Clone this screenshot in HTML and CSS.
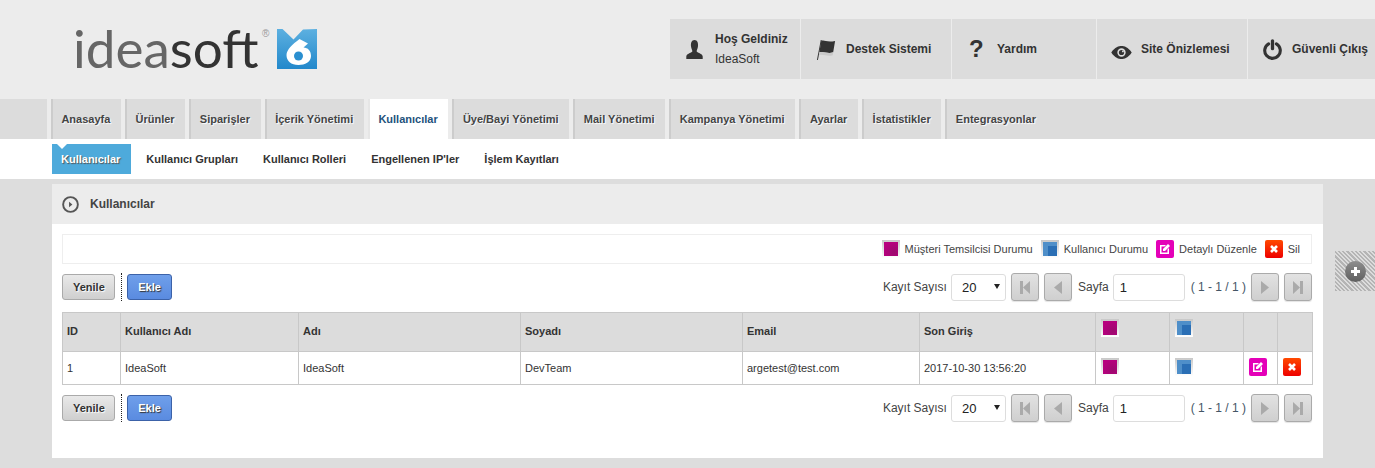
FILE: index.html
```html
<!DOCTYPE html>
<html>
<head>
    <title>Kullanıcılar</title>
    <link rel="stylesheet" href="styles.css">
</head>
<body>
    <div class="header">
        <div class="logo">
            <span class="logo-text"><span class="logo-idea">idea</span>soft</span>
            <span class="logo-reg">®</span>
            <svg class="logo-six" width="40" height="40" viewBox="0 0 40 40">
                <defs>
                    <linearGradient id="six-bg" x1="0" y1="0" x2="0" y2="1">
                        <stop offset="0" stop-color="#5db0e0"/>
                        <stop offset="1" stop-color="#2288cb"/>
                    </linearGradient>
                </defs>
                <path d="M0 0 L5.500 0 L16.500 10.500 L26 0.500 L40 0 L40 40 L0 40 Z" fill="url(#six-bg)"/>
                <path d="M22.500 10 L31 14.500 L26.500 18.500 C31 18.500 34 22 34 27 C34 33 28 36 21.500 36 C14 36 9.500 32 9.500 26 C9.500 20.500 16 15 22.500 10 Z" fill="#fff"/>
                <circle cx="21.500" cy="27" r="4.500" fill="#2a8fd0"/>
            </svg>
        </div>
        <div class="top-menu">
            <a class="top-item top-user">
                <svg width="19" height="21" viewBox="0 0 22 24"><path d="M11 1 C14.500 1 15.500 5 15 8.500 C14.700 11 13.500 12.500 13.500 14 C13.500 16 20.500 16.500 20.500 20 L20.500 23 L1.500 23 L1.500 20 C1.500 16.500 8.500 16 8.500 14 C8.500 12.500 7.300 11 7 8.500 C6.500 5 7.500 1 11 1 Z" fill="#333"/></svg>
                <span class="top-text"><b>Hoş Geldiniz</b><span>IdeaSoft</span></span>
            </a>
            <a class="top-item top-support">
                <svg width="21" height="23" viewBox="0 0 22 24"><path d="M1 23 L5 2 L6 2 L2 23 Z" fill="#333"/><path d="M5.500 3 C9 1.500 11 5 20 3 L18 15 C12 17 8 13.500 3.500 15 Z" fill="#333"/><path d="M3.500 15 C8 13.500 12 17 18 15 L17.500 18 C12 20 8 16.500 3 18 Z" fill="#c9c9c9"/></svg>
                <b>Destek Sistemi</b>
            </a>
            <a class="top-item top-help">
                <span class="help-mark">?</span>
                <b>Yardım</b>
            </a>
            <a class="top-item top-preview">
                <svg class="eye" width="21" height="13" viewBox="0 0 22 14"><path fill-rule="evenodd" d="M0 7 C4 1 8 0 11 0 C14 0 18 1 22 7 C18 13 14 14 11 14 C8 14 4 13 0 7 Z M11 2.500 A4.500 4.500 0 1 0 11 11.500 A4.500 4.500 0 1 0 11 2.500 Z" fill="#333"/><circle cx="11" cy="7" r="2.800" fill="#333"/><circle cx="12.500" cy="5.800" r="1" fill="#ddd"/></svg>
                <b>Site Önizlemesi</b>
            </a>
            <a class="top-item top-exit">
                <svg width="19" height="21" viewBox="0 0 22 24"><path d="M6.500 5.500 A9 9 0 1 0 15.500 5.500" fill="none" stroke="#333" stroke-width="3.600" stroke-linecap="round"/><path d="M11 2 L11 11" stroke="#333" stroke-width="3.800" stroke-linecap="round"/></svg>
                <b>Güvenli Çıkış</b>
            </a>
        </div>
    </div>

    <div class="nav">
        <a class="tab">Anasayfa</a>
        <a class="tab">Ürünler</a>
        <a class="tab">Siparişler</a>
        <a class="tab">İçerik Yönetimi</a>
        <a class="tab active">Kullanıcılar</a>
        <a class="tab">Üye/Bayi Yönetimi</a>
        <a class="tab">Mail Yönetimi</a>
        <a class="tab">Kampanya Yönetimi</a>
        <a class="tab">Ayarlar</a>
        <a class="tab">İstatistikler</a>
        <a class="tab">Entegrasyonlar</a>
    </div>

    <div class="subnav">
        <a class="sub active">Kullanıcılar</a>
        <a class="sub">Kullanıcı Grupları</a>
        <a class="sub">Kullanıcı Rolleri</a>
        <a class="sub">Engellenen IP'ler</a>
        <a class="sub">İşlem Kayıtları</a>
    </div>

    <div class="panel">
        <div class="panel-title">
            <svg width="17" height="17" viewBox="0 0 18 18"><circle cx="9" cy="9" r="7.800" fill="none" stroke="#555" stroke-width="2"/><path d="M7.500 6 L11 9 L7.500 12 Z" fill="#555"/></svg>
            <span>Kullanıcılar</span>
        </div>
        <div class="panel-body">
            <div class="legend">
                <span class="legend-item"><i class="status status-pink"></i>Müşteri Temsilcisi Durumu</span>
                <span class="legend-item"><i class="status status-blue"></i>Kullanıcı Durumu</span>
                <span class="legend-item"><i class="action action-edit"><svg width="12" height="12" viewBox="0 0 12 12"><path d="M1 2 H7 L5.500 3.500 H2.500 V9.500 H8.500 V6.500 L10 5 V11 H1 Z" fill="#fff"/><path d="M9 1 L11 3 L6 8 L4 8 L4 6 Z" fill="#fff"/></svg></i>Detaylı Düzenle</span>
                <span class="legend-item"><i class="action action-del"><svg width="10" height="10" viewBox="0 0 10 10"><path d="M2 2 L8 8 M8 2 L2 8" stroke="#fff" stroke-width="2.600"/></svg></i>Sil</span>
            </div>

            <div class="toolbar">
                <div class="toolbar-left">
                    <button class="btn">Yenile</button>
                    <span class="sep"></span>
                    <button class="btn btn-blue">Ekle</button>
                </div>
                <div class="pager">
                    <span class="pager-label">Kayıt Sayısı</span>
                    <span class="select">20<i class="caret"></i></span>
                    <button class="page-btn"><svg width="10" height="13" viewBox="0 0 10 13"><path d="M0 0 H3 V13 H0 Z M10 0 V13 L3 6.500 Z" fill="#aaa"/></svg></button>
                    <button class="page-btn"><svg width="8" height="13" viewBox="0 0 8 13"><path d="M8 0 V13 L0 6.500 Z" fill="#aaa"/></svg></button>
                    <span class="pager-label pager-page">Sayfa</span>
                    <span class="page-input">1</span>
                    <span class="pager-info">( 1 - 1 / 1 )</span>
                    <button class="page-btn"><svg width="8" height="13" viewBox="0 0 8 13"><path d="M0 0 V13 L8 6.500 Z" fill="#aaa"/></svg></button>
                    <button class="page-btn"><svg width="10" height="13" viewBox="0 0 10 13"><path d="M10 0 H7 V13 H10 Z M0 0 V13 L7 6.500 Z" fill="#aaa"/></svg></button>
                </div>
            </div>

            <table class="grid">
                <colgroup>
                    <col class="c-id"><col class="c-user"><col class="c-name"><col class="c-name"><col class="c-email"><col class="c-login">
                    <col class="c-status"><col class="c-status"><col class="c-act"><col class="c-act-last">
                </colgroup>
                <thead>
                    <tr>
                        <th>ID</th><th>Kullanıcı Adı</th><th>Adı</th><th>Soyadı</th><th>Email</th><th>Son Giriş</th>
                        <th class="icon-cell"><i class="status status-pink"></i></th>
                        <th class="icon-cell"><i class="status status-blue"></i></th>
                        <th></th><th></th>
                    </tr>
                </thead>
                <tbody>
                    <tr>
                        <td>1</td><td>IdeaSoft</td><td>IdeaSoft</td><td>DevTeam</td><td>argetest@test.com</td><td>2017-10-30 13:56:20</td>
                        <td class="icon-cell"><i class="status status-pink"></i></td>
                        <td class="icon-cell"><i class="status status-blue"></i></td>
                        <td class="icon-cell"><i class="action action-edit"><svg width="12" height="12" viewBox="0 0 12 12"><path d="M1 2 H7 L5.500 3.500 H2.500 V9.500 H8.500 V6.500 L10 5 V11 H1 Z" fill="#fff"/><path d="M9 1 L11 3 L6 8 L4 8 L4 6 Z" fill="#fff"/></svg></i></td>
                        <td class="icon-cell"><i class="action action-del"><svg width="10" height="10" viewBox="0 0 10 10"><path d="M2 2 L8 8 M8 2 L2 8" stroke="#fff" stroke-width="2.600"/></svg></i></td>
                    </tr>
                </tbody>
            </table>

            <div class="toolbar toolbar-bottom">
                <div class="toolbar-left">
                    <button class="btn">Yenile</button>
                    <span class="sep"></span>
                    <button class="btn btn-blue">Ekle</button>
                </div>
                <div class="pager">
                    <span class="pager-label">Kayıt Sayısı</span>
                    <span class="select">20<i class="caret"></i></span>
                    <button class="page-btn"><svg width="10" height="13" viewBox="0 0 10 13"><path d="M0 0 H3 V13 H0 Z M10 0 V13 L3 6.500 Z" fill="#aaa"/></svg></button>
                    <button class="page-btn"><svg width="8" height="13" viewBox="0 0 8 13"><path d="M8 0 V13 L0 6.500 Z" fill="#aaa"/></svg></button>
                    <span class="pager-label pager-page">Sayfa</span>
                    <span class="page-input">1</span>
                    <span class="pager-info">( 1 - 1 / 1 )</span>
                    <button class="page-btn"><svg width="8" height="13" viewBox="0 0 8 13"><path d="M0 0 V13 L8 6.500 Z" fill="#aaa"/></svg></button>
                    <button class="page-btn"><svg width="10" height="13" viewBox="0 0 10 13"><path d="M10 0 H7 V13 H10 Z M0 0 V13 L7 6.500 Z" fill="#aaa"/></svg></button>
                </div>
            </div>
        </div>
    </div>

    <div class="side-tab"><span class="side-plus"></span></div>
</body>
</html>
```

FILE: styles.css
```css
html, body {
    margin: 0;
    padding: 0;
    height: 468px;
    overflow: hidden;
}

body {
    background-color: #dddddd;
    font-family: "Liberation Sans", Arial, sans-serif;
    font-size: 11px;
    color: #333;
    position: relative;
}

/* Top area */
.header {
    height: 99px;
    background-color: #ececec;
    display: flex;
    justify-content: space-between;
    box-sizing: border-box;
    padding-left: 73px;
}

.logo {
    display: flex;
    align-items: flex-start;
    padding-top: 18px;
}

.logo-text {
    width: 188px;
    font-family: Lato, "Open Sans", sans-serif;
    font-weight: 400;
    font-size: 53px;
    line-height: 60px;
    color: #333;
}

.logo-idea {
    color: #666;
}

.logo-reg {
    width: 15px;
    margin: 11px 0 0 1px;
    font-size: 10px;
    line-height: 10px;
    color: #999;
}

.logo-six {
    margin-top: 11px;
}

.top-menu {
    display: flex;
    height: 60px;
    margin-top: 19px;
}

.top-item {
    display: flex;
    align-items: center;
    box-sizing: border-box;
    height: 60px;
    background-color: #dcdcdc;
    margin-right: 1px;
    font-size: 12px;
    color: #333;
}

.top-user { width: 130px; padding-left: 15px; gap: 11px; }
.top-support { width: 150px; padding-left: 15px; gap: 9px; }
.top-help { width: 144px; padding-left: 17px; gap: 13px; }
.top-preview { width: 150px; padding-left: 14px; gap: 9px; }
.top-exit { width: 127px; padding-left: 15px; gap: 10px; margin-right: 0; }

.top-text {
    display: flex;
    flex-direction: column;
    gap: 6px;
}

.help-mark {
    width: 15px;
    font-size: 24px;
    font-weight: bold;
}

.eye {
    margin-top: 6px;
}

/* Main tabs */
.nav {
    height: 40px;
    background-color: #dcdcdc;
    display: flex;
    padding-left: 47px;
}

.tab {
    display: flex;
    align-items: center;
    height: 40px;
    box-sizing: border-box;
    padding: 0 10.8px 0 8.4px;
    margin-left: 4px;
    background-color: #dcdcdc;
    border-left: 2px solid #cccccc;
    box-shadow: -4px 0 0 #ececec;
    font-weight: bold;
    font-size: 11px;
    color: #444;
    text-shadow: 1px 1px 1px #fff;
}

.tab.active {
    background-color: #fff;
    border-left-color: #e6e6e6;
    color: #23527c;
}

/* Sub tabs */
.subnav {
    height: 40px;
    box-sizing: border-box;
    background-color: #fff;
    display: flex;
    align-items: center;
    padding-left: 52px;
    gap: 25px;
}

.sub {
    font-weight: bold;
    font-size: 11px;
    color: #333;
}

.sub.active {
    position: relative;
    display: flex;
    align-items: center;
    height: 30px;
    padding: 0 11px 0 9px;
    margin-right: -10px;
    background-color: #4eaadb;
    color: #fff;
    text-shadow: 1px 1px 1px #555;
}

.sub.active::before {
    content: "";
    position: absolute;
    left: 5px;
    top: 0;
    border-left: 5px solid transparent;
    border-right: 5px solid transparent;
    border-top: 5px solid #fff;
}

/* Panel */
.panel {
    margin: 5px 52px 0;
    height: 274px;
    background-color: #fff;
}

.panel-title {
    height: 40px;
    background-color: #ececec;
    display: flex;
    align-items: center;
    padding-left: 10px;
    gap: 11px;
    font-size: 12px;
    font-weight: bold;
    color: #444;
}

.panel-body {
    padding: 10px 11px 0 10px;
}

.legend {
    height: 30px;
    box-sizing: border-box;
    border: 1px solid #eeeeee;
    display: flex;
    justify-content: flex-end;
    align-items: center;
    padding-right: 11px;
    gap: 8px;
    font-size: 11px;
    color: #444;
}

.legend-item {
    display: flex;
    align-items: center;
    gap: 5px;
}

.status {
    display: inline-block;
    box-sizing: border-box;
    width: 18px;
    height: 18px;
    padding: 2px;
    vertical-align: middle;
}

.status-pink {
    background:
        radial-gradient(circle at 70% 70%, #9c0a6e 0, #b8007f 75%) content-box,
        linear-gradient(#c8c8c8, #fff) border-box;
}

.status-blue {
    background:
        linear-gradient(#2b6fb5, #2b6fb5) right 2px bottom 2px / 9px 10px no-repeat,
        linear-gradient(#4f8fc9, #4f8fc9) content-box,
        linear-gradient(#c8c8c8, #fff) border-box;
}

.action {
    display: inline-flex;
    align-items: center;
    justify-content: center;
    width: 18px;
    height: 18px;
    border-radius: 2px;
    vertical-align: middle;
}

.action-edit { background-color: #e400b8; }
.action-del { background: linear-gradient(#ff4a00, #ee0000); }

/* Toolbars */
.toolbar {
    display: flex;
    justify-content: space-between;
    align-items: center;
    margin-top: 10px;
    height: 26px;
}

.toolbar-bottom {
    margin-top: 10px;
}

.toolbar-left {
    display: flex;
    align-items: center;
}

.btn {
    box-sizing: border-box;
    height: 26px;
    padding: 0 10px;
    width: 53px;
    border: 1px solid #aaaaaa;
    border-radius: 3px;
    background: linear-gradient(#e9e9e9, #cfcfcf);
    font-family: inherit;
    font-size: 11px;
    font-weight: bold;
    color: #333;
    text-shadow: 1px 1px 1px #fff;
}

.btn-blue {
    width: 45px;
    padding: 0;
    background: linear-gradient(#6f9fea, #5a8be0);
    border-color: #3c62a8;
    color: #fff;
    text-shadow: 1px 1px 1px #333;
}

.sep {
    display: block;
    height: 28px;
    margin: 0 5px 0 6px;
    border-left: 1px dotted #222;
}

.pager {
    display: flex;
    align-items: center;
    font-size: 12px;
    color: #444;
}

.select {
    box-sizing: border-box;
    display: flex;
    align-items: center;
    width: 55px;
    height: 27px;
    margin: 0 5px 0 4px;
    padding-left: 10px;
    border: 1px solid #ddd;
    border-radius: 3px;
    background-color: #fff;
    font-size: 13px;
    color: #222;
    position: relative;
}

.caret {
    position: absolute;
    right: 5px;
    top: 9px;
    border-left: 3px solid transparent;
    border-right: 3px solid transparent;
    border-top: 5px solid #222;
}

.page-btn {
    box-sizing: border-box;
    width: 28px;
    height: 28px;
    padding: 0;
    margin-right: 5px;
    display: flex;
    align-items: center;
    justify-content: center;
    border: 1px solid #aaaaaa;
    border-radius: 3px;
    background: linear-gradient(#e2e2e2, #cfcfcf);
    box-shadow: 0 1px 1px #e4e4e4;
}

.page-btn:last-child {
    margin-right: 0;
}

.pager-page {
    margin-left: 1px;
}

.page-input {
    box-sizing: border-box;
    display: flex;
    align-items: center;
    width: 72px;
    height: 27px;
    margin-left: 4px;
    padding-left: 6px;
    border: 1px solid #ddd;
    border-radius: 3px;
    font-size: 13px;
    color: #222;
}

.pager-info {
    margin: 0 5px 0 6px;
    color: #456;
}

/* Table */
.grid {
    width: 1250px;
    margin-top: 12px;
    border-collapse: collapse;
    table-layout: fixed;
    font-size: 11px;
}

.c-id { width: 58px; }
.c-user { width: 178px; }
.c-name { width: 222px; }
.c-email { width: 177px; }
.c-login { width: 176px; }
.c-status { width: 74px; }
.c-act { width: 34px; }
.c-act-last { width: 35px; }

.grid th,
.grid td {
    border: 1px solid #c8c8c8;
    padding: 0 5px 0 4px;
    text-align: left;
    color: #333;
}

.grid th {
    padding-bottom: 2px;
    box-sizing: border-box;
    height: 39px;
    background-color: #dcdcdc;
    font-weight: bold;
}

.grid td {
    height: 32px;
}

.grid .icon-cell {
    padding-left: 5px;
}

.grid th .status {
    margin-bottom: 6px;
}

.grid td .status {
    margin-bottom: 3px;
}

.grid td .action {
    margin-bottom: 2px;
}

/* Floating tab on the right */
.side-tab {
    position: absolute;
    right: 0;
    top: 251px;
    width: 40px;
    height: 40px;
    display: flex;
    align-items: center;
    justify-content: center;
    background: repeating-linear-gradient(45deg, #b4b4b4 0, #b4b4b4 1.5px, #dcdcdc 1.5px, #dcdcdc 3px);
}

.side-plus {
    width: 21px;
    height: 21px;
    border-radius: 50%;
    background:
        linear-gradient(#fff, #fff) center / 9px 3px no-repeat,
        linear-gradient(#fff, #fff) center / 3px 9px no-repeat,
        linear-gradient(#8e8e8e, #5f5f5f);
}
```
